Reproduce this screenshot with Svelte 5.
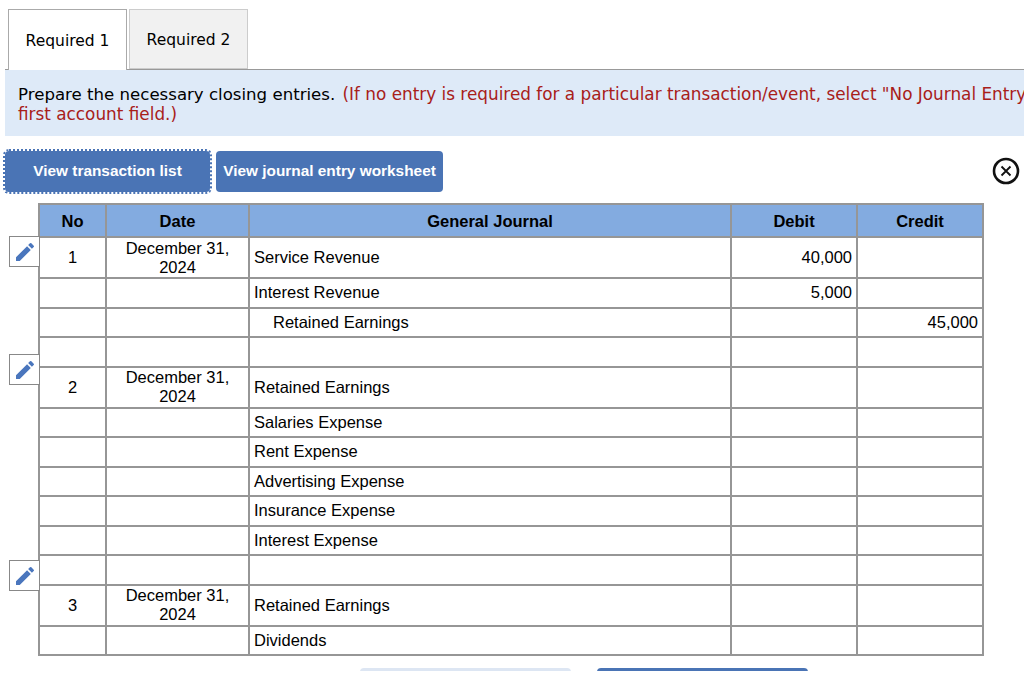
<script>
  const rows = [
    { no: '1', date: 'December 31, 2024', account: 'Service Revenue', debit: '40,000' },
    { account: 'Interest Revenue', debit: '5,000' },
    { account: 'Retained Earnings', credit: '45,000', indent: true },
    {},
    { no: '2', date: 'December 31, 2024', account: 'Retained Earnings' },
    { account: 'Salaries Expense' },
    { account: 'Rent Expense' },
    { account: 'Advertising Expense' },
    { account: 'Insurance Expense' },
    { account: 'Interest Expense' },
    {},
    { no: '3', date: 'December 31, 2024', account: 'Retained Earnings' },
    { account: 'Dividends' }
  ];

  // offset of the edit buttons from the top of the table
  const editTops = [33, 151, 357];
</script>

<div class="page">
  <div class="tabs">
    <button class="tab active">Required 1</button>
    <button class="tab">Required 2</button>
  </div>

  <div class="prompt">
    Prepare the necessary closing entries. <span class="hint">(If no entry is required for a particular transaction/event, select "No Journal Entry Required" in the<br />first account field.)</span>
  </div>

  <div class="actions">
    <button class="btn focused">View transaction list</button>
    <button class="btn worksheet">View journal entry worksheet</button>
    <svg class="close" viewBox="0 0 28 28" width="28" height="28" aria-label="Close">
      <circle cx="14" cy="14" r="12" fill="none" stroke="#111" stroke-width="2.6" />
      <path d="M9.5 9.5l9 9M18.5 9.5l-9 9" fill="none" stroke="#111" stroke-width="1.8" />
    </svg>
  </div>

  <div class="journal">
    {#each editTops as top}
      <button class="edit" style="top: {top}px" aria-label="Edit">
        <svg viewBox="0 0 24 24" width="24" height="24">
          <path d="M3 17.25V21h3.75L17.81 9.94l-3.75-3.75L3 17.25zM20.71 7.04a1 1 0 0 0 0-1.41l-2.34-2.34a1 1 0 0 0-1.41 0l-1.83 1.83 3.75 3.75 1.83-1.83z" fill="#4a76bd" />
        </svg>
      </button>
    {/each}

    <table>
      <thead>
        <tr>
          <th class="c-no">No</th>
          <th class="c-date">Date</th>
          <th class="c-account">General Journal</th>
          <th class="c-amount">Debit</th>
          <th class="c-amount">Credit</th>
        </tr>
      </thead>
      <tbody>
        {#each rows as row}
          <tr class:tall={row.date}>
            <td class="center">{row.no ?? ''}</td>
            <td class="center date">{row.date ?? ''}</td>
            <td class:indent={row.indent}>{row.account ?? ''}</td>
            <td class="num">{row.debit ?? ''}</td>
            <td class="num">{row.credit ?? ''}</td>
          </tr>
        {/each}
      </tbody>
    </table>
  </div>

  <div class="pager">
    <button class="page-btn prev" aria-label="Previous"></button>
    <button class="page-btn next" aria-label="Next"></button>
  </div>
</div>

<style>
  :global(body) {
    margin: 0;
    background: #fff;
    overflow: hidden;
  }

  .page {
    width: 1024px;
    height: 671px;
    overflow: hidden;
    padding-top: 9px;
    box-sizing: border-box;
    font-family: "Liberation Sans", Arial, sans-serif;
    color: #000;
  }

  .tabs {
    display: flex;
    gap: 2px;
    margin-left: 5px;
    padding-left: 3px;
    height: 61px;
    box-sizing: border-box;
    border-bottom: 1px solid #999;
  }

  .tab {
    width: 119px;
    height: 60px;
    padding: 2px 0 0;
    border: 1px solid #ccc;
    background: #f1f1f1;
    color: #000;
    font-family: "DejaVu Sans", Verdana, sans-serif;
    font-size: 15.5px;
  }

  .tab.active {
    height: 61px;
    padding-bottom: 1px;
    background: #fff;
    border-color: #aaa;
    border-bottom: none;
    position: relative;
    z-index: 1;
  }

  .prompt {
    margin-left: 5px;
    width: 1150px;
    height: 66px;
    box-sizing: border-box;
    padding: 15px 13px 0;
    background: #deeaf8;
    font-family: "DejaVu Sans", Verdana, sans-serif;
    font-size: 16.6px;
    line-height: 20px;
    white-space: nowrap;
  }

  .hint {
    margin-left: 2px;
    color: #a8201a;
    font-size: 16.85px;
    line-height: 1;
  }

  .actions {
    display: flex;
    align-items: center;
    gap: 6px;
    margin: 15px 0 0 5px;
    height: 41px;
    position: relative;
    padding-right: 4px;
  }

  .btn {
    height: 41px;
    padding: 0 0 2px;
    border: none;
    border-radius: 4px;
    background: #4a74b5;
    color: #fff;
    font-family: "Liberation Sans", Arial, sans-serif;
    font-size: 15.4px;
    font-weight: bold;
  }

  .focused {
    width: 205px;
    outline: 2px dotted #4a74b5;
    outline-offset: 0;
  }

  .worksheet {
    width: 227px;
  }

  .close {
    margin-left: auto;
    margin-bottom: 2px;
  }

  .journal {
    position: relative;
    margin: 11px 0 0 38px;
    width: 946px;
  }

  .edit {
    position: absolute;
    left: -29px;
    width: 31px;
    height: 31px;
    padding: 0;
    background: #fff;
    border: 1px solid #888;
    display: flex;
    align-items: center;
    justify-content: center;
    z-index: 1;
  }

  table {
    width: 946px;
    table-layout: fixed;
    border-collapse: collapse;
    font-size: 16.5px;
  }

  th,
  td {
    border: 2px solid #969696;
    padding: 0 4px;
    height: 29.5px;
    box-sizing: border-box;
    line-height: 19px;
    font-weight: normal;
  }

  th {
    height: 33px;
    padding-top: 2px;
    background: #83abe0;
    font-weight: bold;
  }

  tr.tall td {
    height: 41px;
  }

  .c-no {
    width: 67px;
  }

  .c-date {
    width: 143px;
  }

  .c-amount {
    width: 126px;
  }

  .center {
    text-align: center;
  }

  .date {
    padding: 0 16px;
  }

  .indent {
    padding-left: 23px;
  }

  .num {
    text-align: right;
  }

  .pager {
    display: flex;
    gap: 26px;
    margin: 12px 0 0 360px;
  }

  .page-btn {
    width: 211px;
    height: 40px;
    border: none;
    border-radius: 4px;
    padding: 0;
  }

  .prev {
    background: #dde6f3;
  }

  .next {
    background: #4a74b5;
  }
</style>
